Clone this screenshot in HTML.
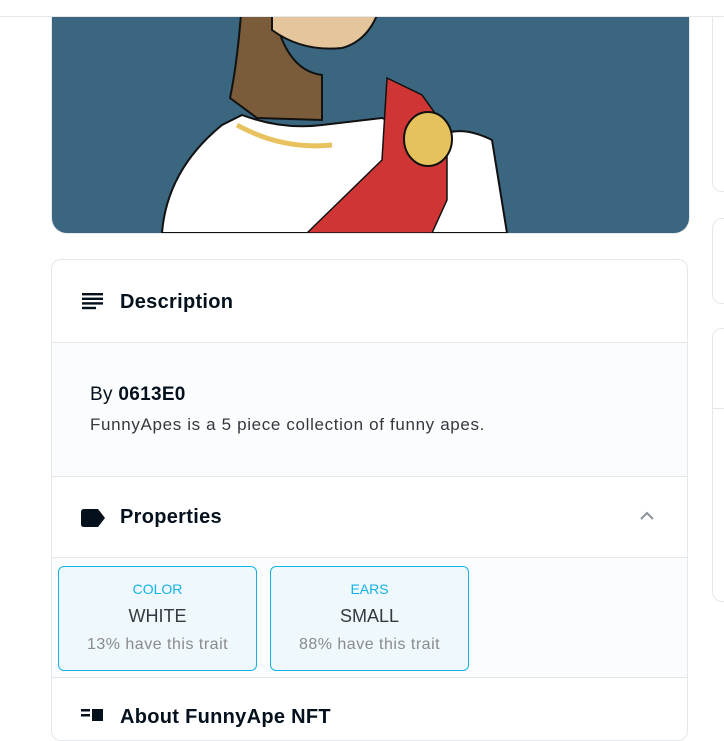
<!DOCTYPE html>
<html><head><style>
body{margin:0;width:724px;height:717px;overflow:hidden;background:#fff;font-family:"Liberation Sans",sans-serif;position:relative}
.hdr{position:absolute;left:0;top:0;width:724px;height:16px;background:#fff;border-bottom:1px solid #e5e8eb;z-index:3}
.img{position:absolute;left:51px;top:0;width:637px;height:233px;border:1px solid #e5e8eb;border-top:none;border-radius:0 0 16px 16px;overflow:hidden;background:#3b6680}
.rc{position:absolute;left:712px;width:30px;border:1px solid #e5e8eb;border-radius:10px}
.card{position:absolute;left:51px;top:259px;width:635px;height:480px;border:1px solid #e5e8eb;border-radius:10px;overflow:hidden}
.sec{position:absolute;left:0;width:635px;border-bottom:1px solid #e5e8eb}
.t{position:absolute;left:68px;font-size:20px;font-weight:bold;color:#04111d;letter-spacing:0.3px}
.trait{position:absolute;top:306px;width:197px;height:103px;border:1px solid #15b2e5;border-radius:6px;background:#eef8fd;text-align:center}
.trait .a{margin-top:14px;font-size:14px;color:#15b2e5}
.trait .b{margin-top:9px;font-size:18px;color:#353840}
.trait .c{margin-top:9px;font-size:16px;color:#8a8a8a;letter-spacing:0.5px}
</style></head><body>
<div class="hdr"></div>
<div class="img">
<svg width="637" height="233" viewBox="0 0 637 233">
<path d="M160 0 L190 0 Q186 60 178 98 L205 118 L270 120 L270 75 Q230 70 220 0 Z" fill="#7a5c3a" stroke="#111" stroke-width="2"/>
<path d="M220 0 L330 0 Q320 40 290 48 Q250 52 220 30 Z" fill="#e5c59c" stroke="#111" stroke-width="2"/>
<path d="M110 233 Q115 170 170 125 L190 115 Q230 130 270 125 L330 118 Q360 130 375 145 Q400 120 440 140 L455 233 Z" fill="#fff" stroke="#111" stroke-width="2"/>
<path d="M185 125 Q230 150 280 145" fill="none" stroke="#e8c25f" stroke-width="5"/>
<path d="M255 233 L330 160 L335 78 L370 95 L395 130 L395 200 L380 233 Z" fill="#d03535" stroke="#111" stroke-width="1.5"/>
<ellipse cx="376" cy="139" rx="24" ry="27" fill="#e6c25c" stroke="#111" stroke-width="2"/>
</svg>
</div>
<div class="rc" style="top:-10px;height:200px"></div>
<div class="rc" style="top:218px;height:84px"></div>
<div class="rc" style="top:328px;height:272px"></div>
<div class="rc" style="top:408px;height:0;border-width:1px 0 0 0;border-radius:0"></div>
<div class="card">
 <div class="sec" style="top:0;height:82px">
  <svg style="position:absolute;left:30px;top:33px" width="21" height="17"><g fill="#04111d"><rect y="0" width="21" height="2.4"/><rect y="4.6" width="21" height="2.4"/><rect y="9.2" width="21" height="2.4"/><rect y="13.8" width="14" height="2.4"/></g></svg>
  <div class="t" style="top:31px">Description</div>
 </div>
 <div class="sec" style="top:83px;height:133px;background:#fbfcfd">
  <div style="position:absolute;left:38px;top:41px;font-size:19px;color:#04111d;letter-spacing:0.3px">By <b>0613E0</b></div>
  <div style="position:absolute;left:38px;top:72px;font-size:17px;color:#353840;letter-spacing:0.65px">FunnyApes is a 5 piece collection of funny apes.</div>
 </div>
 <div class="sec" style="top:217px;height:80px">
  <svg style="position:absolute;left:29px;top:32px" width="25" height="18"><path d="M3 0 H17 L24 9 L17 18 H3 Q0 18 0 15 V3 Q0 0 3 0Z" fill="#04111d"/></svg>
  <div class="t" style="top:29px">Properties</div>
  <svg style="position:absolute;left:587px;top:34px" width="16" height="10"><path d="M2 8 L8 2 L14 8" fill="none" stroke="#8a939b" stroke-width="2"/></svg>
 </div>
 <div class="sec" style="top:298px;height:119px;background:#fbfcfd"></div>
 <div class="trait" style="left:6px"><div class="a">COLOR</div><div class="b">WHITE</div><div class="c">13% have this trait</div></div>
 <div class="trait" style="left:218px"><div class="a">EARS</div><div class="b">SMALL</div><div class="c">88% have this trait</div></div>
 <svg style="position:absolute;left:29px;top:449px" width="22" height="12"><g fill="#04111d"><rect width="9" height="2.5"/><rect y="5" width="9" height="2.5"/><rect x="11" width="11" height="12"/></g></svg>
 <div class="t" style="top:446px">About FunnyApe NFT</div>
</div>
</body></html>
